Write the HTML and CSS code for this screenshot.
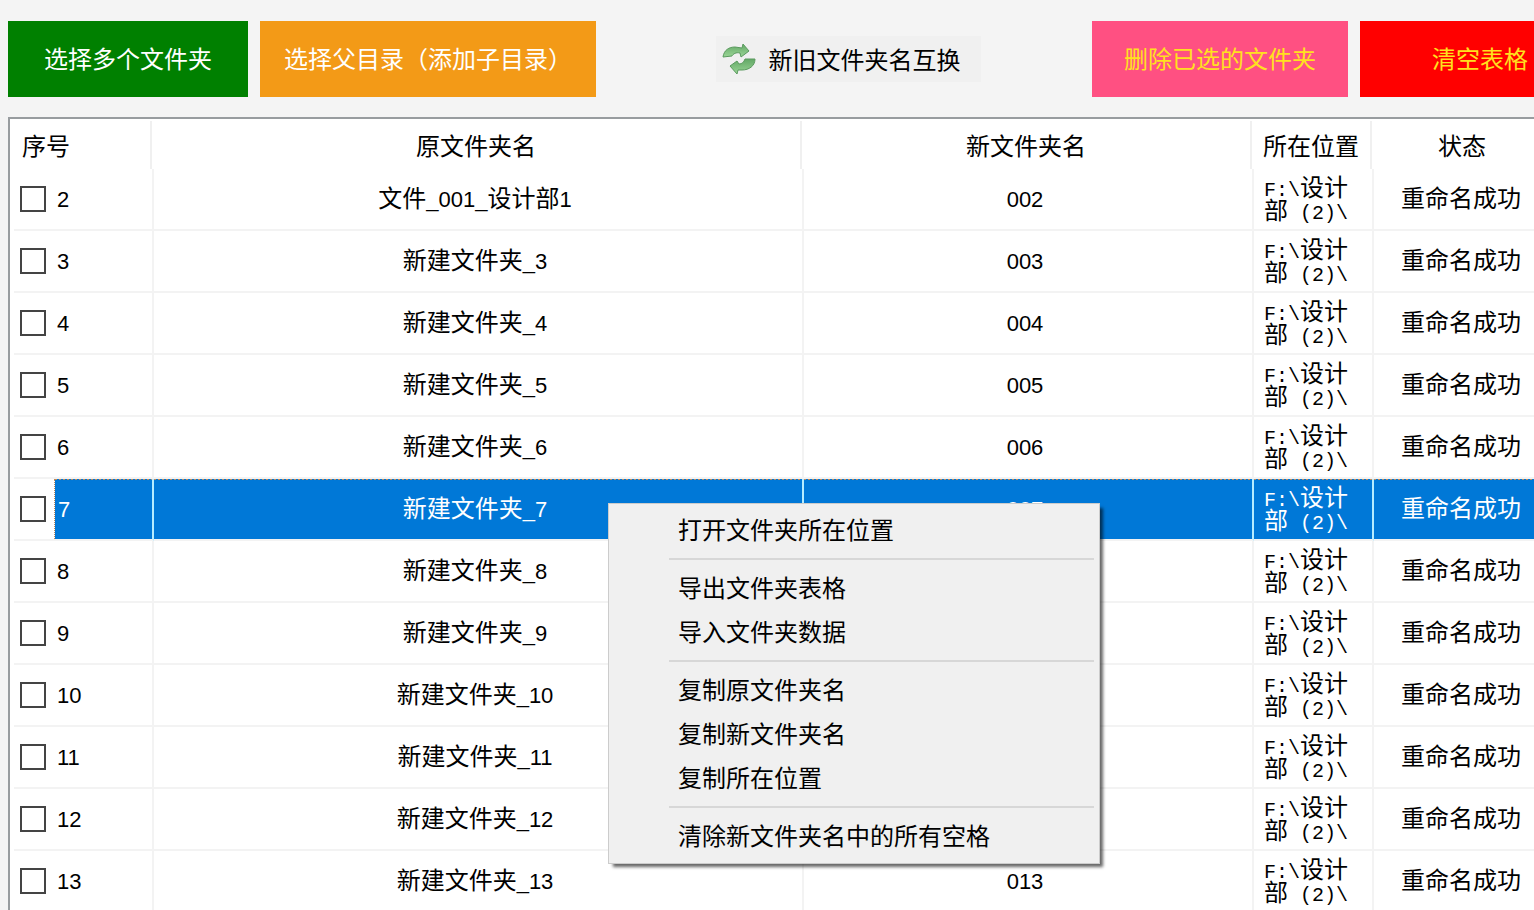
FILE: index.html
```html
<!DOCTYPE html>
<html lang="zh-CN">
<head>
    <meta charset="UTF-8">
    <title>文件夹批量重命名</title>
    <link rel="stylesheet" href="styles.css">
</head>
<body>
<div class="toolbar">
    <button type="button" class="btn green">选择多个文件夹</button>
    <button type="button" class="btn orange">选择父目录（添加子目录）</button>
    <div class="swapBox">
        <button type="button" class="swap">
            <svg width="34" height="32" viewBox="0 0 34 32" aria-hidden="true">
                <defs>
                    <linearGradient id="leaf" x1="0" y1="0" x2="0" y2="1">
                        <stop offset="0" stop-color="#63a866"/>
                        <stop offset="1" stop-color="#9ad596"/>
                    </linearGradient>
                </defs>
                <g fill="url(#leaf)" stroke="#5a9a5e" stroke-width="1" stroke-linejoin="round">
                    <path d="M1 14C2 7 7 4 13 4L20 5L21 1L27 8L19 14L18 10C14 9 11 11 10 13Z"/>
                    <path d="M33 16C33 23 27 27 20 27L16 27L15 31L8 23L15 18L17 21C20 21 22 19 23 16Z"/>
                </g>
            </svg>
            新旧文件夹名互换
        </button>
    </div>
    <button type="button" class="btn pink">删除已选的文件夹</button>
    <button type="button" class="btn red">清空表格</button>
</div>

<div class="list">
    <table>
        <colgroup>
            <col class="colNo">
            <col class="colOld">
            <col class="colNew">
            <col class="colPath">
            <col class="colState">
        </colgroup>
        <thead>
            <tr><th class="first">序号</th><th>原文件夹名</th><th>新文件夹名</th><th>所在位置</th><th class="state">状态</th></tr>
        </thead>
        <tbody>
            <tr>
                <td class="no"><div><input type="checkbox" id="c2"><label for="c2">2</label></div></td>
                <td>文件<span>_001_</span>设计部<span>1</span></td><td><span>002</span></td>
                <td class="path"><code>F:\</code>设计部<code> (2)\</code></td><td class="state">重命名成功</td>
            </tr>
            <tr>
                <td class="no"><div><input type="checkbox" id="c3"><label for="c3">3</label></div></td>
                <td>新建文件夹<span>_3</span></td><td><span>003</span></td>
                <td class="path"><code>F:\</code>设计部<code> (2)\</code></td><td class="state">重命名成功</td>
            </tr>
            <tr>
                <td class="no"><div><input type="checkbox" id="c4"><label for="c4">4</label></div></td>
                <td>新建文件夹<span>_4</span></td><td><span>004</span></td>
                <td class="path"><code>F:\</code>设计部<code> (2)\</code></td><td class="state">重命名成功</td>
            </tr>
            <tr>
                <td class="no"><div><input type="checkbox" id="c5"><label for="c5">5</label></div></td>
                <td>新建文件夹<span>_5</span></td><td><span>005</span></td>
                <td class="path"><code>F:\</code>设计部<code> (2)\</code></td><td class="state">重命名成功</td>
            </tr>
            <tr>
                <td class="no"><div><input type="checkbox" id="c6"><label for="c6">6</label></div></td>
                <td>新建文件夹<span>_6</span></td><td><span>006</span></td>
                <td class="path"><code>F:\</code>设计部<code> (2)\</code></td><td class="state">重命名成功</td>
            </tr>
            <tr class="on">
                <td class="no"><div><input type="checkbox" id="c7"><label for="c7">7</label></div></td>
                <td>新建文件夹<span>_7</span></td><td><span>007</span></td>
                <td class="path"><code>F:\</code>设计部<code> (2)\</code></td><td class="state">重命名成功</td>
            </tr>
            <tr>
                <td class="no"><div><input type="checkbox" id="c8"><label for="c8">8</label></div></td>
                <td>新建文件夹<span>_8</span></td><td><span>008</span></td>
                <td class="path"><code>F:\</code>设计部<code> (2)\</code></td><td class="state">重命名成功</td>
            </tr>
            <tr>
                <td class="no"><div><input type="checkbox" id="c9"><label for="c9">9</label></div></td>
                <td>新建文件夹<span>_9</span></td><td><span>009</span></td>
                <td class="path"><code>F:\</code>设计部<code> (2)\</code></td><td class="state">重命名成功</td>
            </tr>
            <tr>
                <td class="no"><div><input type="checkbox" id="c10"><label for="c10">10</label></div></td>
                <td>新建文件夹<span>_10</span></td><td><span>010</span></td>
                <td class="path"><code>F:\</code>设计部<code> (2)\</code></td><td class="state">重命名成功</td>
            </tr>
            <tr>
                <td class="no"><div><input type="checkbox" id="c11"><label for="c11">11</label></div></td>
                <td>新建文件夹<span>_11</span></td><td><span>011</span></td>
                <td class="path"><code>F:\</code>设计部<code> (2)\</code></td><td class="state">重命名成功</td>
            </tr>
            <tr>
                <td class="no"><div><input type="checkbox" id="c12"><label for="c12">12</label></div></td>
                <td>新建文件夹<span>_12</span></td><td><span>012</span></td>
                <td class="path"><code>F:\</code>设计部<code> (2)\</code></td><td class="state">重命名成功</td>
            </tr>
            <tr>
                <td class="no"><div><input type="checkbox" id="c13"><label for="c13">13</label></div></td>
                <td>新建文件夹<span>_13</span></td><td><span>013</span></td>
                <td class="path"><code>F:\</code>设计部<code> (2)\</code></td><td class="state">重命名成功</td>
            </tr>
        </tbody>
    </table>
</div>

<!-- 右键菜单 -->
<div class="menu">
    <button type="button">打开文件夹所在位置</button>
    <hr>
    <button type="button">导出文件夹表格</button>
    <button type="button">导入文件夹数据</button>
    <hr>
    <button type="button">复制原文件夹名</button>
    <button type="button">复制新文件夹名</button>
    <button type="button">复制所在位置</button>
    <hr>
    <button type="button">清除新文件夹名中的所有空格</button>
</div>
</body>
</html>
```

FILE: styles.css
```css
*{
    margin:0;
    padding:0;
    box-sizing:border-box;
}
html,body{
    height:100%;
}
body{
    position:relative;
    overflow:hidden;
    font-family:"Noto Sans CJK SC",sans-serif;
    font-size:24px;
    line-height:36px;
    color:#000;
    background-color:#f4f4f4;
}
button{
    padding-bottom:2px;
    border:0;
    font:inherit;
    color:inherit;
    white-space:nowrap;
}

/* 工具栏，右侧超出窗口 */
.toolbar{
    display:flex;
    gap:12px;
    margin-right:-66px;
    padding:21px 0 20px 8px;
}
.btn{
    flex:none;
    height:76px;
}
.green{
    width:240px;
    color:#fff;
    background-color:#008000;
}
.orange{
    width:336px;
    color:#fff;
    background-color:#f39a17;
}
.pink{
    width:256px;
    color:#ffe11e;
    background-color:#ff5082;
}
.red{
    width:240px;
    color:#ffe11e;
    background-color:#f00;
}
.swapBox{
    display:flex;
    flex:1;
    align-items:center;
    justify-content:center;
    padding-left:8px;
}
.swap{
    display:flex;
    align-items:center;
    gap:13px;
    height:46px;
    padding:0 20px 0 6px;
    background-color:#f0f0f0;
}

/* 表格 */
.list{
    margin:0 -16px 0 8px;
    padding-left:4px;
    border:solid #989c9f;
    border-width:2px 0 0 2px;
    background-color:#fff;
}
table{
    width:100%;
    table-layout:fixed;
    border-spacing:0;
}
.colNo{
    width:140px;
}
.colNew{
    width:450px;
}
.colPath{
    width:120px;
}
.colState{
    width:176px;
}
th{
    height:50px;
    padding:2px 6px 0 0;
    font-weight:normal;
    background:linear-gradient(#f0f0f0,#f0f0f0) right 2px top 2px / 2px 100% no-repeat;
}
th.first{
    padding-left:8px;
    text-align:left;
}
td{
    height:62px;
    padding:0 6px 4px 0;
    border-right:2px solid #f3f3f3;
    border-bottom:2px solid #f3f3f3;
    text-align:center;
}
.state{
    padding-right:0;
}
td span,td label{
    font-family:"Liberation Sans",sans-serif;
    font-size:22px;
}
td span{
    line-height:24px;
}
td.no{
    padding:0;
}
.no div{
    display:flex;
    align-items:center;
    gap:8px;
    padding-left:6px;
}
.no input{
    appearance:none;
    width:26px;
    height:26px;
    border:2px solid #444;
    background-color:#fff;
}
.no label{
    flex:1;
    height:60px;
    padding-left:3px;
    line-height:62px;
    text-align:left;
}
td.path{
    padding:0 10px 4px;
    line-height:23px;
    text-align:left;
}
.path code{
    font-family:"Liberation Mono",monospace;
    font-size:20px;
    line-height:12px;
}

/* 选中行 */
.on td{
    border-right-color:#b5ecff;
    color:#fff;
}
.on td:not(.no),.on label{
    background-color:#0078d7;
    background-image:repeating-linear-gradient(90deg,#c08a5c 0,#c08a5c 2px,#0078d7 2px,#0078d7 4px);
    background-size:100% 1px;
    background-repeat:no-repeat;
    background-clip:padding-box;
}
.on label{
    border-left:1px dotted #c08a5c;
}

/* 右键菜单 */
.menu{
    position:absolute;
    left:608px;
    top:503px;
    width:492px;
    padding:4px 5px 5px;
    border:1px solid #ccc;
    background-color:#f0f0f0;
    box-shadow:4px 4px 3px -1px rgba(0,0,0,.6);
}
.menu button{
    display:block;
    width:100%;
    height:44px;
    padding-left:64px;
    text-align:left;
    background-color:transparent;
}
.menu hr{
    height:2px;
    margin:6px 0 6px 55px;
    border:0;
    background-color:#d7d7d7;
}
```
